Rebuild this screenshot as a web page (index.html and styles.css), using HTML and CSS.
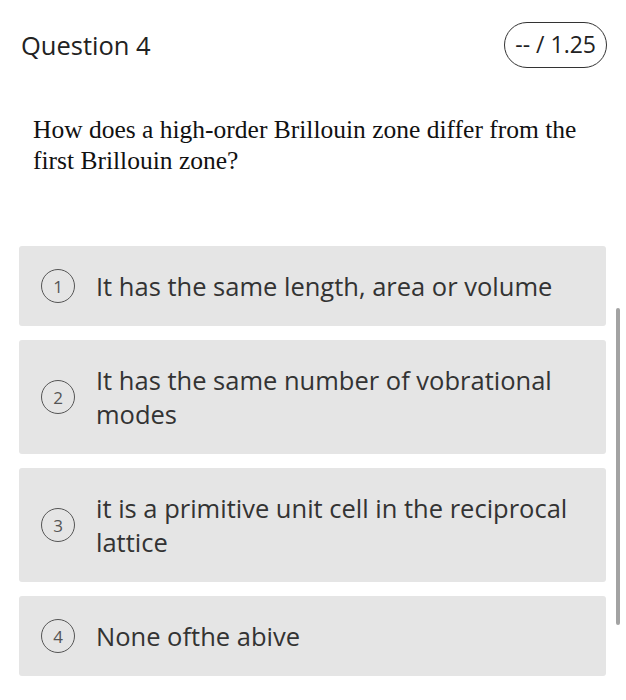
FILE: index.html
```html
<!DOCTYPE html>
<html>
<head>
<meta charset="utf-8">
<link rel="stylesheet" href="styles.css">
</head>
<body>
<div class="page">
  <div class="header">
    <h1 class="title">Question 4</h1>
    <div class="score">-- / 1.25</div>
  </div>
  <p class="question">How does a high-order Brillouin zone differ from the first Brillouin zone?</p>
  <div class="options">
    <div class="option"><span class="num">1</span><span class="text">It has the same length, area or volume</span></div>
    <div class="option"><span class="num">2</span><span class="text">It has the same number of vobrational modes</span></div>
    <div class="option"><span class="num">3</span><span class="text">it is a primitive unit cell in the reciprocal lattice</span></div>
    <div class="option"><span class="num">4</span><span class="text">None ofthe abive</span></div>
  </div>
  <div class="scrollbar"></div>
</div>
</body>
</html>
```

FILE: styles.css
```css
html, body {
  margin: 0;
  padding: 0;
  background: #fff;
}
.page {
  position: relative;
  width: 626px;
  height: 700px;
  overflow: hidden;
  font-family: "Open Sans", sans-serif;
}
.header {
  display: flex;
  justify-content: space-between;
  align-items: center;
  padding: 22px 19px 0 21px;
}
.title {
  margin: 0;
  font-size: 25.5px;
  font-weight: 400;
  color: #222;
  line-height: 46px;
}
.score {
  box-sizing: border-box;
  height: 46px;
  padding: 0 10px;
  border: 1.5px solid #333;
  border-radius: 23px;
  font-size: 23px;
  line-height: 43px;
  color: #222;
}
.question {
  margin: 46px 30px 0 33px;
  font-family: "Liberation Serif", serif;
  font-size: 25.5px;
  line-height: 31px;
  color: #111;
}
.options {
  display: flex;
  flex-direction: column;
  gap: 14px;
  margin: 70px 20px 0 19px;
}
.option {
  display: flex;
  align-items: center;
  gap: 21px;
  padding: 23px 30px 23px 22px;
  background: #e5e5e5;
  border-radius: 3px;
}
.num {
  box-sizing: border-box;
  flex: none;
  width: 34px;
  height: 34px;
  border: 1.5px solid #555;
  border-radius: 50%;
  display: flex;
  align-items: center;
  justify-content: center;
  font-size: 17px;
  color: #555;
}
.text {
  font-size: 25.5px;
  line-height: 34px;
  color: #333;
}
.scrollbar {
  position: absolute;
  left: 616px;
  top: 308px;
  width: 4px;
  height: 317px;
  border-radius: 2px;
  background: #a3a3a3;
}
```
